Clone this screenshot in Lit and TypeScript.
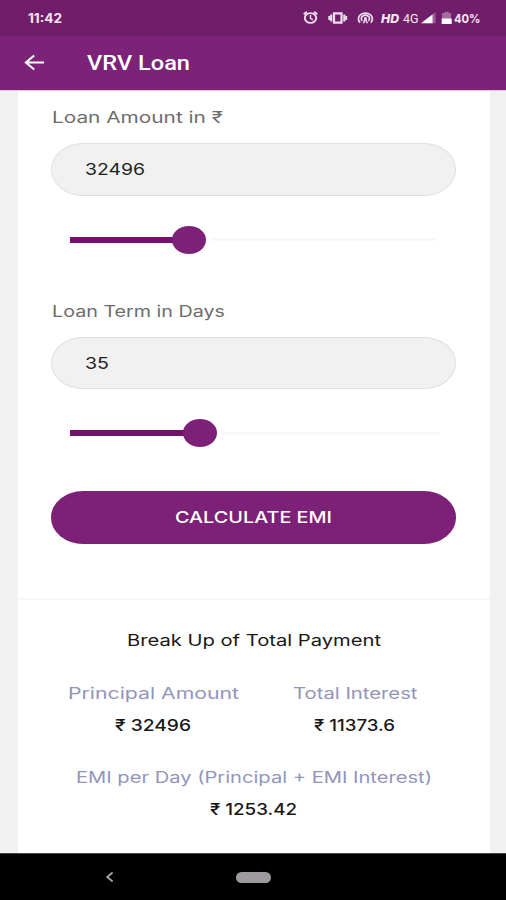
import { LitElement, html, css } from "lit";
import { customElement, property } from "lit/decorators.js";

/* A single line of text set to an exact width; the baseline is 15px below the top. */
@customElement("wide-text")
class WideText extends LitElement {
  @property() text = "";
  @property({ type: Number }) width = 100;
  @property() variant = "body";

  static styles = css`
    :host { display: block; flex: none; }
    svg { display: block; overflow: visible; }
    text { fill: currentColor; font-family: Inter, "Noto Sans", sans-serif; font-size: 16px; font-weight: 400; white-space: pre; }
    .medium { font-weight: 450; }
    .title { font-family: Roboto, sans-serif; font-size: 20.5px; font-weight: 500; }
    .clock { font-size: 12.5px; font-weight: 700; }
    .tiny { font-size: 12px; font-weight: 700; }
    .net { font-family: Roboto, sans-serif; font-size: 13px; }
    .hd { font-size: 12px; font-weight: 800; font-style: italic; }
  `;

  render() {
    return html`<svg width=${this.width} height="20">
      <text class=${this.variant} x="0" y="15" textLength=${this.width} lengthAdjust="spacingAndGlyphs">${this.text}</text>
    </svg>`;
  }
}

@customElement("range-slider")
class RangeSlider extends LitElement {
  @property({ type: Number }) filled = 0;
  @property({ type: Number }) length = 366;

  static styles = css`
    :host { display: block; height: 28px; margin-left: 19px; }
    .row { display: flex; align-items: center; height: 28px; }
    .fill { height: 6px; background: #76106f; }
    .thumb { width: 34px; height: 28px; border-radius: 50%; background: #7c2078; margin-left: -2px; flex: none; }
    .rest { height: 3px; background: #f8f8f8; flex: 1; margin-left: 5px; }
  `;

  render() {
    return html`<div class="row" style="width:${this.length}px">
      <div class="fill" style="width:${this.filled}px"></div>
      <div class="thumb"></div>
      <div class="rest"></div>
    </div>`;
  }
}

@customElement("app-root")
class AppRoot extends LitElement {
  static styles = css`
    :host { display: flex; flex-direction: column; width: 506px; height: 900px; background: #f1f1f1; overflow: hidden; }
    .status { height: 36px; flex: none; background: #701e69; color: #f6e9f5; display: flex; align-items: flex-start; box-sizing: border-box; padding: 8px 26px 0 28px; }
    .icons { margin-left: auto; display: flex; }
    .icons svg { display: block; }
    .bar { height: 54px; flex: none; background: #7c2278; color: #fff; display: flex; align-items: flex-start; box-sizing: border-box; padding: 18px 0 0 24px; }
    .bar svg { display: block; width: 21px; height: 17px; margin-right: 41.5px; }
    .bar wide-text { margin-top: 1px; }
    .edge { height: 1px; flex: none; background: #dfc5de; }
    .card { flex: 1; width: 472.5px; margin-left: 17.5px; background: #fff; box-sizing: border-box; }
    .form { height: 507px; box-sizing: border-box; padding: 17px 34.5px 0 33.5px; color: #6d6d6d; }
    .form wide-text { margin-left: 0.5px; }
    .pill { height: 52.5px; box-sizing: border-box; border-radius: 32px / 26.25px; display: flex; align-items: center; }
    .input { background: #f1f1f1; border: 1px solid #dfdfdf; color: #222; padding: 1.5px 0 0 32px; margin-top: 15px; margin-bottom: 30px; }
    .gap { height: 48px; }
    .button { width: 100%; border: 0; padding: 1px 0 0; background: #7c2078; color: #fff; justify-content: center; margin-top: 44px; }
    .summary { border-top: 2px solid #f7f7f7; color: #181818; display: flex; flex-direction: column; align-items: center; padding-top: 31px; }
    .pair { display: flex; gap: 54px; margin: 32.5px 0; padding-right: 23px; }
    .item { display: flex; flex-direction: column; align-items: center; gap: 12px; }
    .caption { color: #9494bb; }
    .nav { height: 47px; flex: none; box-sizing: border-box; background: #000; border-top: 1px solid #444; display: flex; align-items: center; padding-left: 105px; }
    .home { width: 35px; height: 11px; border-radius: 6px; background: #9d9b9d; margin-left: 122px; }
  `;

  private statusIcons() {
    return html`<svg width="78" height="20" viewBox="0 0 78 20" fill="none" stroke="#f0dfef" stroke-width="1.9">
      <ellipse cx="7.5" cy="10" rx="5.7" ry="4.9"/><path d="M7.5 7v3.4l2.5 1.4" stroke-width="1.4"/><path d="M.7 6.2l3.2-2.5M14.3 6.2l-3.2-2.5"/>
      <path d="M31 5.3h7.5v9.4H31z" stroke-width="2.2"/><path d="M28.2 6.5v7M41.3 6.5v7" stroke-width="2.1"/><path d="M26.3 8v4M43.2 8v4" stroke-width="2"/>
      <path d="M57 14.6a7 5.8 0 1 1 10.8 0M59.4 12.9a4.1 3.3 0 1 1 6 0" stroke-width="1.7"/>
      <circle cx="62.4" cy="10.3" r="1.4" fill="#f0dfef" stroke="none"/><path d="M62.4 10.5l-1.9 4.8M62.4 10.5l1.9 4.8" stroke-width="1.5"/>
    </svg>`;
  }

  private pair(caption: string, cw: number, value: string, vw: number) {
    return html`<div class="item">
      <wide-text class="caption" .text=${caption} .width=${cw}></wide-text>
      <wide-text .text=${value} .width=${vw} variant="medium"></wide-text>
    </div>`;
  }

  render() {
    return html`
      <div class="status">
        <wide-text text="11:42" width="34" variant="clock"></wide-text>
        <div class="icons">
          ${this.statusIcons()}
          <wide-text text="HD" width="18" variant="hd"></wide-text>
          <svg width="4" height="20"></svg>
          <wide-text text="4G" width="15.5" variant="net"></wide-text>
          <svg width="35.5" height="20" viewBox="0 0 35.5 20">
            <path d="M17.5 4v11.2H3z" fill="#9c6298"/><path d="M14.5 6.4v8.8H3z" fill="#fff"/>
            <path d="M24 5h2.5V3.7h4V5H33v6h-9z" fill="#a16c9e"/><path d="M23.7 10.5h10V16h-10z" fill="#fff"/>
          </svg>
          <wide-text text="40%" width="26.5" variant="tiny"></wide-text>
        </div>
      </div>
      <div class="bar">
        <svg viewBox="0 0 21 17" fill="none" stroke="#fff" stroke-width="2"><path d="M20 8.5H2M10.2 1.5 1.8 8.5l8.4 7"/></svg>
        <wide-text text="VRV Loan" width="103" variant="title"></wide-text>
      </div>
      <div class="edge"></div>
      <div class="card">
        <div class="form">
          <wide-text text="Loan Amount in ₹" width="171"></wide-text>
          <div class="pill input"><wide-text text="32496" width="60"></wide-text></div>
          <range-slider filled="104" length="366"></range-slider>
          <div class="gap"></div>
          <wide-text text="Loan Term in Days" width="173"></wide-text>
          <div class="pill input"><wide-text text="35" width="24"></wide-text></div>
          <range-slider filled="115" length="369"></range-slider>
          <button class="pill button"><wide-text text="CALCULATE EMI" width="157" variant="medium"></wide-text></button>
        </div>
        <div class="summary">
          <wide-text text="Break Up of Total Payment" width="254"></wide-text>
          <div class="pair">
            ${this.pair("Principal Amount", 171, "₹ 32496", 76)}
            ${this.pair("Total Interest", 124.5, "₹ 11373.6", 81)}
          </div>
          ${this.pair("EMI per Day (Principal + EMI Interest)", 356, "₹ 1253.42", 87)}
        </div>
      </div>
      <div class="nav">
        <svg width="9" height="12" viewBox="0 0 9 12" fill="none" stroke="#a5a5a5" stroke-width="1.8"><path d="M7.6 1.5 2.2 6l5.4 4.5"/></svg>
        <div class="home"></div>
      </div>
    `;
  }
}
